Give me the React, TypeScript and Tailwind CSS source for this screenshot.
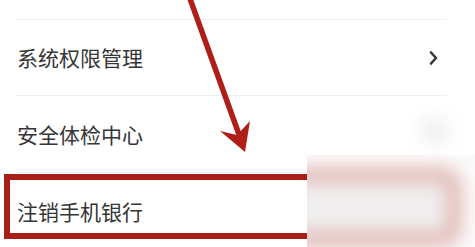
const rows = [
  { label: '系统权限管理', arrow: true },
  { label: '安全体检中心', arrow: false },
  { label: '注销手机银行', arrow: false },
];

function Chevron() {
  return (
    <svg width="9" height="14" viewBox="0 0 9 14" className="text-[#343a40]">
      <polyline points="2,1.5 7,7 2,12.5" fill="none" stroke="currentColor" strokeWidth="2.6" strokeLinecap="round" strokeLinejoin="round" />
    </svg>
  );
}

export default function App() {
  return (
    <div
      className="relative h-[247px] w-[475px] overflow-hidden bg-white"
      style={{ fontFamily: '"Noto Sans CJK SC", "Noto Sans", sans-serif' }}
    >
      <div className="ml-[15px] mr-[28px] pt-[19px]">
        {rows.map((row, i) => (
          <div
            key={row.label}
            className={`flex h-[77px] items-center justify-between pl-[2px] pr-[9px] ${
              i === 0 ? 'border-y border-[#efefef]' : i === 1 ? 'border-b border-[#f4f4f4]' : ''
            }`}
          >
            <span className="text-[21px] leading-none text-[#363636]">{row.label}</span>
            {row.arrow && <Chevron />}
          </div>
        ))}
      </div>

      {/* faint smudge where the second chevron was blurred out */}
      <div className="absolute left-[420px] top-[116px] h-[30px] w-[30px] rounded-full bg-[#f0f0f0] blur-[9px]" />

      {/* red box around the last row */}
      <div className="absolute left-[4px] top-[174px] h-[65px] w-[456px] border-[6px] border-[#a81f1a]" />

      {/* arrow */}
      <svg className="absolute inset-0" width="475" height="247" viewBox="0 0 475 247">
        <line x1="189" y1="-4" x2="241" y2="140" stroke="#b01e19" strokeWidth="5.5" />
        <polygon points="245,152 220,131 237,135 250,121" fill="#b01e19" />
      </svg>

      {/* blurred right part of the box */}
      <div className="absolute left-[307px] right-0 top-[155px] bottom-0 overflow-hidden bg-[#fbfafa]">
        <div className="absolute left-[-40px] top-[11px] h-[82px] w-[196px] rounded-[22px] border-[18px] border-[#e3c1bd] bg-[#f0eeee] blur-[8px]" />
      </div>
    </div>
  );
}
